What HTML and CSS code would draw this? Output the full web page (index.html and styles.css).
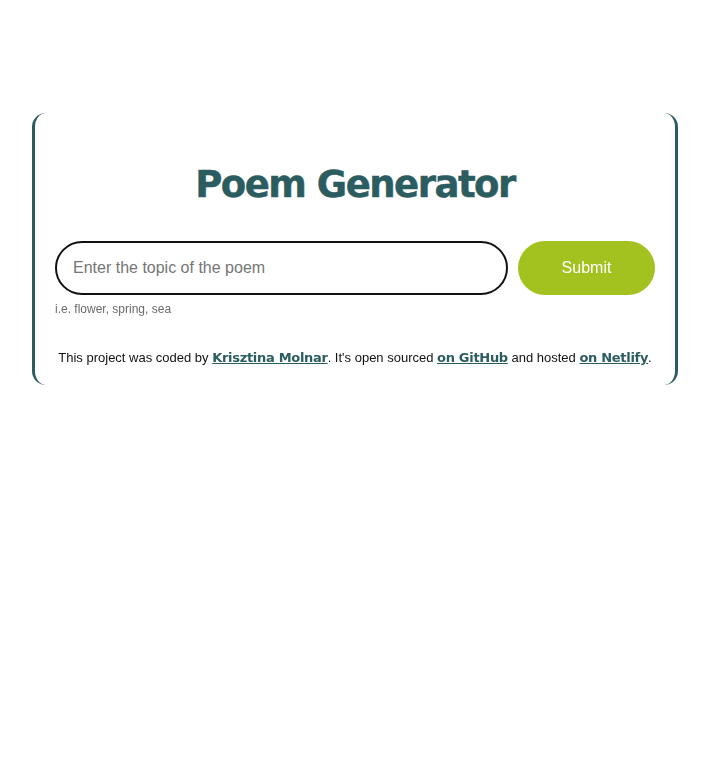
FILE: index.html
```html
<!DOCTYPE html>
<html lang="en">
<head>
<meta charset="utf-8">
<title>Poem Generator</title>
<link rel="stylesheet" href="styles.css">
</head>
<body>
<div class="page">
  <div class="card">
    <h1 class="title">Poem Generator</h1>
    <form class="form">
      <div class="row">
        <input class="topic" type="text" placeholder="Enter the topic of the poem" autofocus>
        <button class="submit" type="button">Submit</button>
      </div>
      <div class="hint">i.e. flower, spring, sea</div>
    </form>
    <p class="footer">This project was coded by <a href="#">Krisztina Molnar</a>. It's open sourced <a href="#">on GitHub</a> and hosted <a href="#">on Netlify</a>.</p>
  </div>
</div>
</body>
</html>
```

FILE: styles.css
```css
html, body {
  margin: 0;
  padding: 0;
  background: #fff;
}
body {
  font-family: "Liberation Sans", Arial, sans-serif;
}
.page {
  padding: 113px 32px 0;
}
.card {
  box-sizing: border-box;
  width: 646px;
  margin: 0 auto;
  border-left: 3px solid #2b5c60;
  border-right: 3px solid #2b5c60;
  border-radius: 14px;
  padding: 50px 20px 20px;
}
.title {
  margin: 0;
  text-align: center;
  font-family: "DejaVu Sans", sans-serif;
  font-weight: bold;
  font-size: 37px;
  line-height: 44px;
  letter-spacing: -1.5px;
  color: #2b5c60;
  -webkit-text-stroke: 0.5px #2b5c60;
}
.form {
  margin-top: 34px;
}
.row {
  display: flex;
  gap: 10px;
}
.topic {
  flex: 1;
  box-sizing: border-box;
  height: 54px;
  border: 2px solid #111;
  border-radius: 27px;
  padding: 0 16px;
  font-family: "Liberation Sans", Arial, sans-serif;
  font-size: 16px;
  color: #222;
  outline: none;
}
.topic::placeholder {
  color: #757575;
}
.submit {
  width: 137px;
  height: 54px;
  border: none;
  border-radius: 27px;
  background: #a3c21f;
  color: #fff;
  font-family: "Liberation Sans", Arial, sans-serif;
  font-size: 16px;
}
.hint {
  margin-top: 7px;
  font-size: 12px;
  color: #6b6b6b;
}
.footer {
  margin: 34px 0 0;
  text-align: center;
  white-space: nowrap;
  font-size: 13px;
  line-height: 15px;
  color: #111;
}
.footer a {
  font-family: "DejaVu Sans", sans-serif;
  font-weight: bold;
  font-size: 13px;
  letter-spacing: -0.3px;
  color: #2b5c60;
}
```
